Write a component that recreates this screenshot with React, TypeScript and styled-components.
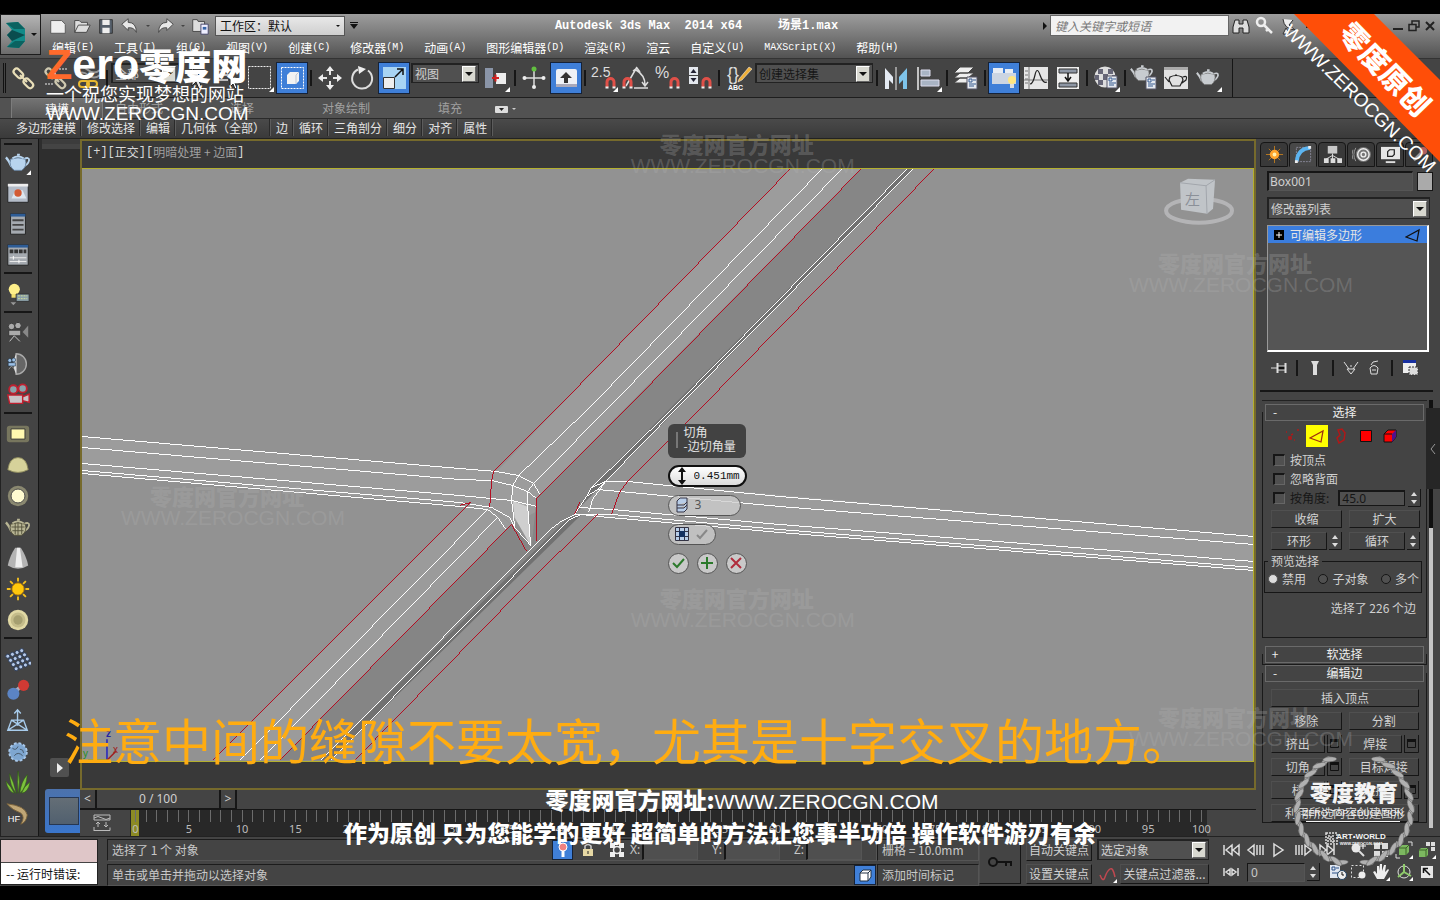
import React from "react";
import styled, { createGlobalStyle, css } from "styled-components";

const UI = `"Noto Sans", "Noto Sans CJK SC", sans-serif`;
const CJK = `"Noto Sans CJK SC", sans-serif`;
const MONO = `"Liberation Mono", "Noto Sans CJK SC", monospace`;
const WIDE = `"Liberation Sans", "Noto Sans CJK SC", sans-serif`;

const Global = createGlobalStyle`
  *, *::before, *::after { box-sizing: border-box; }
  body { margin: 0; background: #000; color: #d0d0d0; font: 12px/16px ${UI}; }
  button, input, select { font: inherit; color: inherit; margin: 0; padding: 0; border: 0; border-radius: 0; background: none; }
  button, select { appearance: none; cursor: pointer; }
  svg { display: block; flex: none; }
`;

/* ---------- shell ---------- */
const Page = styled.div`
  position: relative;
  display: flex;
  flex-direction: column;
  min-height: 100vh;
  padding: 14px 0;
  overflow: hidden;
`;
const Header = styled.header`
  display: grid;
  grid-template-columns: 41px 1fr;
  height: 45px;
  background: linear-gradient(#9c9c9c, #787878 50%, #525252);
  border-bottom: 1px solid #333;
`;
const AppButton = styled.button`
  display: flex;
  align-items: center;
  justify-content: center;
  gap: 4px;
  height: 41px;
  border: 1px solid #1c1c1c;
  background: linear-gradient(#b4b4b4, #6c6c6c);
`;
const HeaderRows = styled.div`
  display: flex;
  flex-direction: column;
  min-width: 0;
`;
const TitleRow = styled.div`
  display: flex;
  align-items: center;
  height: 23px;
  padding-left: 5px;
`;
const QuickButton = styled.button<{ $narrow?: boolean }>`
  display: flex;
  align-items: center;
  justify-content: center;
  width: ${(p) => (p.$narrow ? 11 : 24)}px;
  height: 22px;
`;
const Workspace = styled.label`
  display: flex;
  align-items: center;
  width: 130px;
  height: 20px;
  margin: 0 3px;
  border: 1px solid #555;
  background: linear-gradient(#e8e8e8, #cfcfcf);
  color: #111;
  select { flex: 1; padding-left: 4px; outline: 0; font: 12px/18px ${CJK}; }
  svg { margin-right: 4px; pointer-events: none; }
`;
const Title = styled.h1`
  flex: 1;
  margin: 0;
  padding-right: 5px;
  text-align: center;
  white-space: pre;
  overflow: hidden;
  font: bold 12px/20px ${MONO};
  color: #fff;
`;
const Search = styled.input`
  width: 179px;
  height: 21px;
  padding: 0 4px;
  border: 1px solid #666;
  background: #f2f2f2;
  font: italic 12px/18px ${CJK};
  &::placeholder { color: #777; opacity: 1; }
`;
const WindowButtons = styled.div`
  display: flex;
  margin-left: 41px;
  padding-right: 2px;
  button { display: flex; align-items: center; justify-content: center; width: 16px; height: 22px; }
`;
const MenuBar = styled.nav`
  display: flex;
  gap: 20px;
  padding-left: 11px;
  color: #fff;
  font: 12px/22px ${CJK};
  white-space: nowrap;
  button { display: flex; }
  kbd { font: 10px/22px ${MONO}; }
`;

/* ---------- toolbar ---------- */
const Toolbar = styled.div`
  display: flex;
  align-items: center;
  height: 39px;
  background: #444;
  border-bottom: 1px solid #1e1e1e;
`;
const ToolbarInner = styled.div`
  display: flex;
  align-items: center;
  height: 38px;
  padding-right: 8px;
  border-right: 1px solid #161616;
`;
const Grip = styled.i`
  width: 8px;
  height: 30px;
  background: linear-gradient(90deg, transparent 3px, #111 3px 4px, transparent 4px 5px, #111 5px 6px, transparent 6px);
`;
const Tool = styled.button<{ $on?: boolean }>`
  display: flex;
  align-items: center;
  justify-content: center;
  width: 32px;
  height: 32px;
  ${(p) =>
    p.$on &&
    css`
      background: #3f7fd8;
      border: 1px solid #152238;
    `}
`;
const Sep = styled.i`
  width: 6px;
  height: 16px;
  background: linear-gradient(90deg, transparent 2px, #161616 2px 4px, transparent 4px);
`;
const SelectBox = styled.label<{ $w?: number; $h?: number; $dim?: boolean }>`
  display: flex;
  align-items: center;
  ${(p) => (p.$w ? `width: ${p.$w}px;` : "")}
  height: ${(p) => p.$h ?? 20}px;
  padding: 0 2px;
  border: 1px solid #222;
  border-width: 2px 1px 1px 2px;
  background: #505050;
  color: ${(p) => (p.$dim ? "#161616" : "#d0d0d0")};
  select { flex: 1; min-width: 0; outline: 0; font: 12px/16px ${CJK}; }
`;
const SelectArrow = styled.span`
  display: flex;
  align-items: center;
  justify-content: center;
  width: 14px;
  height: 16px;
  border: 1px solid #fff;
  border-color: #fff #666 #666 #fff;
  background: #d8d8d0;
  pointer-events: none;
`;
const ToolSelect = styled.div<{ $w: number }>`
  width: ${(p) => p.$w}px;
  height: 32px;
  padding: 1px;
`;

/* ---------- ribbon ---------- */
const RibbonTabs = styled.div`
  display: flex;
  align-items: stretch;
  height: 21px;
  padding-left: 11px;
  background: #525252;
  border-bottom: 1px solid #2a2a2a;
  font: 12px/20px ${CJK};
  color: #a0a0a0;
`;
const RibbonTab = styled.button<{ $w: number; $on?: boolean }>`
  width: ${(p) => p.$w}px;
  text-align: right;
  ${(p) =>
    p.$on &&
    css`
      text-align: center;
      background: linear-gradient(#737373, #555);
      border: 1px solid #7c7c7c;
      border-bottom: 0;
      color: #e8e8e8;
    `}
`;
const RibbonView = styled.div`
  display: flex;
  gap: 1px;
  margin-left: 34px;
`;
const RibbonPanels = styled.div`
  display: flex;
  height: 20px;
  padding-left: 11px;
  background: linear-gradient(#4a4a4a, #3a3a3a);
  border-bottom: 1px solid #222;
  font: 12px/16px ${CJK};
  color: #e6e6e6;
  white-space: nowrap;
  button { height: 17px; padding: 0 5px; border-right: 1px solid #5c5c5c; box-shadow: inset -1px 0 #2a2a2a; }
`;

/* ---------- body ---------- */
const Body = styled.div`
  display: grid;
  grid-template-columns: 39px 41px minmax(0, 1fr) 184px;
  flex: 1;
  min-height: 0;
  background: #444;
`;
const SideTools = styled.aside`
  display: flex;
  flex-direction: column;
  align-items: center;
  padding: 4px 2px 0 0;
  border-right: 1px solid #161616;
  background: #444;
  box-shadow: inset 1px 0 #222;
`;
const SideTool = styled.button`
  display: flex;
  align-items: center;
  justify-content: center;
  width: 32px;
  height: 31px;
`;
const SideLine = styled.hr<{ $top?: boolean }>`
  width: 28px;
  height: 2px;
  margin: ${(p) => (p.$top ? "0 0 1px" : "2px 0 4px")};
  border: 0;
  background: #161616;
`;
const LayoutStrip = styled.div`
  display: flex;
  flex-direction: column;
  background: #2e2e2e;
`;
const StripHead = styled.div`
  height: 10px;
  margin-left: 3px;
  border-top: 5px solid #3c3c3c;
  background: #444;
`;
const StripPlay = styled.button`
  display: flex;
  align-items: center;
  justify-content: center;
  width: 19px;
  height: 19px;
  margin: auto 0 12px 11px;
  border-radius: 2px;
  background: #505050;
`;
const LayoutThumb = styled.button`
  height: 44px;
  margin: 0 0 3px 6px;
  padding: 7px 1px 7px 4px;
  border-radius: 3px 0 0 3px;
  background: linear-gradient(#4c72ac, #3a76cc);
  span { display: block; height: 28px; border: 1px solid #263752; background: linear-gradient(#646e76, #51606f); }
`;
const Centre = styled.main`
  display: flex;
  flex-direction: column;
  min-width: 0;
`;
const Viewport = styled.section`
  display: flex;
  flex-direction: column;
  flex: 1;
  border: 2px solid #766a2c;
  background: #393939;
`;
const ViewLabel = styled.div`
  display: flex;
  align-items: flex-start;
  height: 27px;
  padding-left: 4px;
  color: #d8d8d8;
  font: 12px/22px ${CJK};
  white-space: pre;
  button { color: #a0a0a0; }
  b { font: 12px/22px ${MONO}; }
`;
const Canvas = styled.div`
  position: relative;
  flex: 1;
  min-height: 400px;
  margin-bottom: 26px;
  border: 1px solid #b4b02e;
  border-width: 1px 1px 1px 0;
  background: #929292;
  overflow: hidden;
`;
const Scene = styled.svg`
  position: absolute;
  inset: 0;
  width: 100%;
  height: 100%;
`;
const Caddy = styled.form`
  position: absolute;
  left: 50%;
  top: 43%;
  display: flex;
  flex-direction: column;
  align-items: flex-start;
  gap: 8px;
`;
const CaddyTitle = styled.div`
  width: 78px;
  height: 34px;
  margin-bottom: -1px;
  padding: 1px 0 0 16px;
  border-radius: 6px;
  background: linear-gradient(90deg, transparent 8px, #777 8px 10px, transparent 10px) 0 8px / 100% 16px no-repeat, #424242;
  color: #e4e4e4;
  font: 12px/14px ${CJK};
  white-space: nowrap;
`;
const Pill = styled.label<{ $w: number; $focus?: boolean }>`
  display: flex;
  align-items: center;
  gap: 6px;
  width: ${(p) => p.$w}px;
  height: ${(p) => (p.$focus ? 22 : 21)}px;
  padding: 0 5px 0 6px;
  border: ${(p) => (p.$focus ? "2px solid #101010" : "1px solid #555")};
  border-radius: 11px;
  background: ${(p) => (p.$focus ? "linear-gradient(#fff, #dcdcdc)" : "rgba(205, 205, 205, .78)")};
  color: ${(p) => (p.$focus ? "#111" : "#555")};
  input { flex: 1; min-width: 0; width: 0; outline: 0; font: 12px/16px ${UI}; }
`;
const AmountInput = styled.input`
  && { font: 11px/16px ${MONO}; text-align: right; }
`;
const CaddyActions = styled.div`
  display: flex;
  gap: 8px;
  button { display: flex; align-items: center; justify-content: center; width: 21px; height: 21px; border: 1px solid #555; border-radius: 50%; background: #c9c9c9; }
`;

/* ---------- time line ---------- */
const TrackRow = styled.div`
  display: flex;
  height: 20px;
  border-bottom: 1px solid #161616;
  font: 12px/18px ${UI};
`;
const TrackButton = styled.button<{ $w: number }>`
  width: ${(p) => p.$w}px;
  border: 1px solid #161616;
  border-width: 0 2px 1px 0;
  background: #444;
`;
const TimeRow = styled.div`
  display: flex;
  height: 26px;
  padding-right: 49px;
`;
const TimeIcon = styled.button`
  display: flex;
  justify-content: flex-end;
  align-items: center;
  width: 50px;
  padding-right: 19px;
`;
const Ruler = styled.div`
  display: flex;
  flex-direction: column;
  flex: 1;
  padding: 0 5px;
  background: linear-gradient(90deg, transparent 1px, #8c8a24 1px 9px, transparent 9px), #282828;
`;
const Ticks = styled.div`
  display: flex;
  justify-content: space-between;
  height: 12px;
  i { width: 1px; background: #6c6c6c; }
`;
const TickLabels = styled.div`
  display: flex;
  justify-content: space-between;
  font: 11px/14px ${UI};
  color: #bdbdbd;
  span { display: flex; justify-content: center; width: 1px; white-space: nowrap; }
`;

/* ---------- status bar ---------- */
const Status = styled.footer`
  display: flex;
  height: 50px;
  padding: 2px 0 1px;
  background: #444;
  border-top: 1px solid #222;
  font: 12px/20px ${CJK};
  color: #c8c8c8;
  white-space: nowrap;
`;
const Listener = styled.div`
  display: flex;
  flex-direction: column;
  width: 98px;
  margin-right: 9px;
  border: 1px solid #222;
  background: #fff;
  color: #111;
`;
const ListenerLine = styled.input<{ $pink?: boolean }>`
  width: 100%;
  height: ${(p) => (p.$pink ? 22 : 23)}px;
  padding-left: 5px;
  ${(p) => (p.$pink ? "background: #dfc6c8;" : "border-top: 1px solid #444;")}
`;
const StatusColumn = styled.div<{ $w?: number; $gap?: number; $pad?: number }>`
  display: flex;
  flex-direction: column;
  gap: ${(p) => p.$gap ?? 3}px;
  padding: 0 ${(p) => p.$pad ?? 0}px;
  ${(p) => (p.$w ? `width: ${p.$w}px;` : "flex: 1; min-width: 0;")}
`;
const StatusLine = styled.div`
  display: flex;
  align-items: center;
  height: 22px;
  padding-left: 4px;
  border: 1px solid #1c1c1c;
  border-color: #1c1c1c #555 #555 #1c1c1c;
`;
const Prompt = styled.output`
  flex: 1;
  min-width: 0;
  overflow: hidden;
`;
const SmallTool = styled.button<{ $on?: boolean; $w?: number }>`
  display: flex;
  align-items: center;
  justify-content: center;
  width: ${(p) => p.$w ?? 27}px;
  height: 20px;
  ${(p) => p.$on && "background: #3f7fd8; border: 1px solid #152238;"}
`;
const Coord = styled.label`
  display: flex;
  align-items: center;
  width: 82px;
  gap: 2px;
  font-family: ${UI};
  input { width: 56px; height: 20px; border: 1px solid #222; border-left-width: 2px; border-color: #444 #555 #555 #161616; background: #4f4f4f; }
`;
const FlatButton = styled.button<{ $w?: number; $h?: number }>`
  display: flex;
  align-items: center;
  justify-content: center;
  ${(p) => (p.$w ? `width: ${p.$w}px;` : "flex: 1;")}
  height: ${(p) => p.$h ?? 18}px;
  border: 1px solid #161616;
  border-color: #505050 #161616 #161616 #4e4e4e;
  background: #444;
  color: #d2d2d2;
  font: 12px/16px ${CJK};
  white-space: nowrap;
`;
const PlayGrid = styled.div`
  display: grid;
  grid-template-columns: repeat(5, 24px);
  grid-auto-rows: 22px;
  align-items: center;
  margin-left: 10px;
  button { display: flex; align-items: center; justify-content: center; height: 22px; }
`;
const FrameField = styled.label`
  grid-column: span 3;
  display: flex;
  gap: 2px;
  padding-left: 4px;
  input { width: 58px; height: 19px; padding-left: 3px; border: 1px solid #161616; border-color: #161616 #555 #555 #161616; background: #4f4f4f; font: 12px/16px ${UI}; }
`;
const TimeConfig = styled.div`
  display: flex;
  justify-content: flex-end;
  width: 32px;
`;
const NavGrid = styled.div`
  display: grid;
  grid-template-columns: repeat(4, 23px);
  grid-auto-rows: 22px;
  margin-left: 7px;
  padding-right: 2px;
  button { display: flex; align-items: center; justify-content: center; }
`;

/* ---------- command panel ---------- */
const Panel = styled.aside`
  display: flex;
  flex-direction: column;
  padding: 3px 7px 0 4px;
  background: #444;
  font: 12px/16px ${CJK};
  overflow: hidden;
`;
const PanelTabs = styled.div`
  display: flex;
  gap: 1px;
`;
const PanelTab = styled.button<{ $on?: boolean }>`
  display: flex;
  align-items: center;
  justify-content: center;
  width: 28px;
  height: 25px;
  border: 1px solid #161616;
  border-radius: 4px 4px 0 0;
  ${(p) => (p.$on ? "border-bottom-color: #444; background: #484848;" : "background: #393939;")}
`;
const NameRow = styled.div`
  display: flex;
  align-items: center;
  gap: 4px;
  margin: 4px 0 6px 7px;
`;
const ModifierRow = styled.div`
  margin-left: 7px;
`;
const NameInput = styled.input`
  flex: 1;
  min-width: 0;
  height: 20px;
  padding-left: 1px;
  border: 2px solid #161616;
  border-width: 2px 1px 1px 2px;
  border-color: #161616 #555 #555 #161616;
  background: #505050;
  font: 12px/16px ${UI};
`;
const Swatch = styled.button`
  width: 16px;
  height: 19px;
  border: 1px solid #161616;
  background: #aaa;
`;
const Stack = styled.div`
  height: 127px;
  margin: 6px 4px 0 7px;
  border: 2px solid #fff;
  border-width: 1px 2px 2px 1px;
  border-color: #999 #fff #fff #999;
  background: #555;
`;
const StackItem = styled.button`
  display: flex;
  align-items: center;
  gap: 6px;
  width: 100%;
  height: 17px;
  padding: 0 6px;
  background: #3b7ddd;
  color: #e4e4e4;
  font: 12px/16px ${CJK};
  span { flex: 1; text-align: left; }
`;
const StackTools = styled.div`
  display: flex;
  align-items: center;
  justify-content: space-between;
  height: 31px;
  padding: 0 13px 0 11px;
  button { display: flex; }
`;
const Rule = styled.hr`
  width: 100%;
  height: 2px;
  margin: 7px 0 8px;
  border: 0;
  background: #161616;
`;
const RollArea = styled.div`
  position: relative;
  display: flex;
  flex: 1;
  gap: 2px;
  min-height: 0;
  margin-left: 2px;
`;
const Rolls = styled.div`
  display: flex;
  flex-direction: column;
  gap: 8px;
  flex: 1;
  min-width: 0;
  border-top: 1px solid #222;
`;
const Scroll = styled.div`
  width: 4px;
  background: linear-gradient(#111 128px, #c4c4c4 128px);
  margin-bottom: 8px;
`;
const Flyout = styled.button`
  position: absolute;
  right: -7px;
  top: 8px;
  display: flex;
  align-items: center;
  justify-content: center;
  width: 14px;
  height: 81px;
  background: #262626;
`;
const Rollout = styled.section<{ $h?: number; $top?: number }>`
  ${(p) => (p.$h ? `height: ${p.$h}px;` : "")}
  margin-top: ${(p) => p.$top ?? 0}px;
  padding: 0 2px;
  border: 1px solid #1a1a1a;
  border-top: 0;
`;
const RollHead = styled.button`
  display: grid;
  grid-template-columns: 12px 1fr 12px;
  width: 100%;
  height: 17px;
  margin-top: -8px;
  padding: 0 3px;
  border: 1px solid #6a6a6a;
  background: #444;
  color: #eee;
  font: 12px/14px ${CJK};
  text-align: center;
`;
const SubObjects = styled.div`
  display: flex;
  align-items: center;
  justify-content: space-between;
  height: 23px;
  margin: 3px 0;
  padding: 0 23px 0 16px;
  button { display: flex; align-items: center; justify-content: center; width: 22px; height: 22px; }
`;
const EdgeMode = styled.button`
  background: #ff0;
`;
const CheckRow = styled.div`
  display: flex;
  align-items: center;
  height: 19px;
  padding-left: 8px;
  gap: 9px;
`;
const Check = styled.label<{ $dim?: boolean }>`
  display: flex;
  align-items: center;
  gap: 5px;
  color: ${(p) => (p.$dim ? "#161616" : "#d0d0d0")};
  white-space: nowrap;
  input { appearance: none; width: 12px; height: 12px; border: 2px solid #161616; border-width: 2px 1px 1px 2px; border-color: #161616 #666 #666 #161616; background: #505050; }
`;
const AngleInput = styled.input`
  width: 67px;
  height: 16px;
  margin-right: -6px;
  padding-left: 2px;
  border: 1px solid #161616;
  border-width: 2px 1px 1px 2px;
  background: #505050;
  color: #161616;
  font: 12px/12px ${UI};
`;
const ButtonGrid = styled.div<{ $gap: number; $pad: string }>`
  display: grid;
  grid-template-columns: 1fr 1fr;
  gap: ${(p) => p.$gap}px 7px;
  padding: ${(p) => p.$pad};
`;
const Pair = styled.div<{ $wide?: boolean }>`
  display: flex;
  gap: 2px;
  ${(p) => p.$wide && "grid-column: span 2;"}
`;
const Group = styled.fieldset`
  display: flex;
  justify-content: space-between;
  height: 40px;
  margin: 3px 2px 0 -1px;
  padding: 0 2px 0 3px;
  border: 1px solid #161616;
  legend { padding: 0 3px; line-height: 16px; }
`;
const Radio = styled.label`
  display: flex;
  align-items: center;
  gap: 4px;
  height: 20px;
  white-space: nowrap;
  input { appearance: none; width: 10px; height: 10px; border: 1px solid #161616; border-radius: 50%; background: #505050; }
  input:checked { background: #ddd; border-color: #555; }
`;
const Count = styled.p`
  margin: 7px 8px 0 0;
  text-align: right;
`;

/* ---------- overlays ---------- */
const Overlay = styled.div`
  position: absolute;
  pointer-events: none;
  white-space: nowrap;
`;
const Logo = styled(Overlay)`
  left: 46px;
  top: 45px;
  color: #fff;
`;
const LogoName = styled.div`
  display: flex;
  align-items: center;
  height: 38px;
  font: bold 43px/38px ${WIDE};
  span { color: #ff6a2c; }
  b { font: 900 36px/36px ${CJK}; }
`;
const LogoSlogan = styled.div`
  font: 18px/20px ${CJK};
`;
const LogoUrl = styled.div`
  font: 19px/22px ${WIDE};
`;
const Watermark = styled(Overlay)<{ $x: number; $y: number }>`
  left: ${(p) => p.$x}%;
  top: ${(p) => p.$y}px;
  color: rgba(180, 180, 180, .27);
  font: 900 22px/24px ${CJK};
  text-indent: 29px;
  span { display: block; text-indent: 0; font: 21px/22px ${WIDE}; }
`;
const Subtitle = styled(Overlay)`
  left: 64px;
  bottom: 135px;
  color: #ffac10;
  font: 49px/52px ${CJK};
`;
const Captions = styled(Overlay)`
  left: 0;
  right: 0;
  bottom: 52px;
  text-align: center;
  color: #fff;
  font: 900 23px/31px ${CJK};
  span { font: 21px/31px ${WIDE}; }
  p { margin: 0; }
  p:first-child { padding-left: 44px; }
`;
const Corner = styled(Overlay)`
  right: 0;
  top: 14px;
`;
const Badge = styled(Overlay)`
  right: 20px;
  bottom: 28px;
`;

/* ---------- icons ---------- */
const I = ({ s = 28, b = 28, children }: { s?: number; b?: number; children: React.ReactNode }) => (
  <svg width={s} height={s} viewBox={`0 0 ${b} ${b}`} fill="none">
    {children}
  </svg>
);
const Down = ({ c = "#111", s = 8 }: { c?: string; s?: number }) => (
  <svg width={s} height={s / 2} viewBox="0 0 8 4"><path d="M0 0h8L4 4z" fill={c} /></svg>
);
const Fly = () => <path d="M28 23v5h-5z" fill="#fff" />;
const Magnet = ({ x = 14, y = 14 }) => (
  <g transform={`translate(${x} ${y})`}>
    <path d="M2 10V5a3.500 3.500 0 0 1 7 0v5" stroke="#e05048" strokeWidth="3" />
    <path d="M.5 10.500h3M7.500 10.500h3" stroke="#eee" strokeWidth="2" />
  </g>
);
const Teapot = ({ fill = "#c8ccd0", line = "#777" }) => (
  <g>
    <path d="M7 19Q4 12 1 9" stroke={fill} strokeWidth="2.500" />
    <path d="M20 11q6-3 6 1-1 5-7 7" stroke={fill} strokeWidth="2" />
    <path d="M6 11q-2 8 4 12h8q6-4 4-12-8-3-16 0z" fill={fill} stroke={line} />
    <path d="M8 10q6-4 12 0M13 6h3" stroke={fill} strokeWidth="2" />
  </g>
);
const Doc = ({ x = 16, y = 14 }) => (
  <g transform={`translate(${x} ${y})`}>
    <path d="M0 0h10v12H0z" fill="#e6eaf0" stroke="#556" />
    <path d="M2 2h3v3H2zM6 3h3M2 7h7M2 9h5" stroke="#35588e" />
  </g>
);
const Chain = ({ c = "#e9dfb8" }) => (
  <g stroke={c} strokeWidth="2.200">
    <rect x="3" y="6" width="11" height="6" rx="3" transform="rotate(45 8 9)" />
    <rect x="13" y="16" width="11" height="6" rx="3" transform="rotate(45 18 19)" />
    <path d="M10 11l7 7" />
  </g>
);
const EdgeTri = ({ c = "#111" }) => (
  <svg width="16" height="14" viewBox="0 0 16 14" fill="none"><path d="M1 9L14 2l-2 11z" stroke={c} strokeWidth="1.300" /></svg>
);
const Spin = () => (
  <svg width="13" height="18" viewBox="0 0 13 18">
    <path d="M12.500 0v17.500H0" fill="none" stroke="#161616" />
    <path d="M3 7l3-4 3 4zM3 11l3 4 3-4z" fill="#ddd" />
  </svg>
);
const Settings = () => (
  <svg width="15" height="18" viewBox="0 0 15 18">
    <path d="M.5 0v18M14.500 0v17.500H0" fill="none" stroke="#161616" />
    <path d="M3.500 4.500h8v8h-8z" fill="none" stroke="#111" /><path d="M3 4h9v3H3z" fill="#111" />
  </svg>
);

const quick = [
  <path key="n" d="M3 5h12l4 4v10H3z" fill="#eee" stroke="#555" />,
  <path key="o" d="M3 18V5h5l2 2h7v3M3 18l4-8h13l-4 8z" fill="#ddd" stroke="#444" />,
  <g key="s"><path d="M4 4h14v15H4z" fill="#56606c" stroke="#333" /><path d="M7 4h8v6H7zM7 13h8v6H7z" fill="#eee" /></g>,
  <path key="u" d="M2 9l7-6v4q9 0 9 11-3-6-9-5v3z" fill="#e8e8e8" stroke="#444" />,
  null,
  <path key="r" d="M20 9l-7-6v4q-9 0-9 11 3-6 9-5v3z" fill="#e8e8e8" stroke="#444" />,
  null,
  <g key="p"><path d="M3 4h5l1 2h7v11H3z" fill="#ddd" stroke="#444" /><path d="M12 9h8v11h-8z" fill="#eef" stroke="#446" /><path d="M14 12h4v3h-4z" fill="#3865a8" /></g>,
];

const menus: [string, string][] = [
  ["编辑", "(E)"], ["工具", "(T)"], ["组", "(G)"], ["视图", "(V)"], ["创建", "(C)"], ["修改器", "(M)"], ["动画", "(A)"],
  ["图形编辑器", "(D)"], ["渲染", "(R)"], ["渲云", ""], ["自定义", "(U)"], ["", "MAXScript(X)"], ["帮助", "(H)"],
];

type ToolDef = { k: string; on?: boolean; d?: React.ReactNode; select?: [string, number, boolean?] };
const tools: ToolDef[] = [
  { k: "链接", d: <Chain /> },
  { k: "断开链接", d: <><Chain c="#cfc9b0" /><path d="M3 20h8M17 5h8" stroke="#999" strokeWidth="2" strokeDasharray="2 1" /></> },
  { k: "绑定", d: <><path d="M2 6q6-5 12 0t12 0M2 11q6-5 12 0t12 0" stroke="#999" strokeWidth="2" /><rect x="5" y="17" width="10" height="6" rx="3" stroke="#e8b830" strokeWidth="2" /><rect x="13" y="17" width="10" height="6" rx="3" stroke="#e8b830" strokeWidth="2" /></> },
  { k: "-" },
  { k: "选择过滤器", select: ["全部", 70] },
  { k: "选择对象", d: <path d="M10 4v18l4-4 3 7 3-1-3-7h6z" fill="#e8e8e8" stroke="#222" /> },
  { k: "按名称选择", d: <><path d="M4 6h14M4 11h14M4 16h10" stroke="#bbb" strokeWidth="2" /><path d="M16 10v13l3-3 2 5 2-1-2-5h4z" fill="#fff" stroke="#222" /></> },
  { k: "矩形选择区域", d: <><path d="M2.500 2.500h22v22h-22z" stroke="#eee" strokeDasharray="2 1" /><Fly /></> },
  { k: "窗口/交叉", on: true, d: <><path d="M3.500 3.500h22v21h-22z" stroke="#fff" strokeDasharray="2 1" /><path d="M9 11l3-3h9v9l-3 3H9z" fill="#f2f2f2" /><path d="M18 20v-9l3-3" stroke="#c0c8d4" /></> },
  { k: "-" },
  { k: "移动", d: <><path d="M14 5v6M14 17v6M5 14h6M17 14h6" stroke="#e6e6e6" strokeWidth="2" /><path d="M10 7l4-5 4 5zM10 21l4 5 4-5zM7 10l-5 4 5 4zM21 10l5 4-5 4z" fill="#eee" /></> },
  { k: "旋转", d: <><path d="M10 5.500a10 10 0 1 0 10 1" stroke="#ddd" strokeWidth="2" /><path d="M10 2l8 3-7 5z" fill="#eee" /></> },
  { k: "缩放", on: true, d: <><path d="M3 3h23v22H3z" fill="#a8d4f4" /><path d="M3.500 13.500h11v11h-11z" fill="#eee" stroke="#333" /><path d="M15 13l8-8M17 5h6v6" stroke="#111" strokeWidth="1.500" /></> },
  { k: "参考坐标系", select: ["视图", 70] },
  { k: "使用轴点中心", d: <><path d="M3 4h8v20H3z" fill="#8a95a8" /><path d="M14 9h10v11H14z" fill="#eee" /><path d="M10 14h7M13.500 10.500v7" stroke="#d02020" strokeWidth="2" /><Fly /></> },
  { k: "-" },
  { k: "选择并操纵", d: <><path d="M14 7v15M6 14h16" stroke="#ddd" strokeWidth="1.500" /><circle cx="14" cy="5" r="2.500" fill="#62c040" /><circle cx="4.500" cy="14" r="2" fill="#eee" /><circle cx="23.500" cy="14" r="2" fill="#eee" /><circle cx="14" cy="23" r="2" fill="#eee" /></> },
  { k: "键盘快捷键覆盖", on: true, d: <><rect x="4" y="5" width="21" height="18" rx="2" fill="#eef1f6" /><path d="M14 8l6 6h-4v5h-4v-5H8z" fill="#333" /><path d="M4 20h21v3H4z" fill="#aab" /></> },
  { k: "-" },
  { k: "捕捉开关", d: <><text x="1" y="13" fontSize="14" fill="#ddd" fontFamily="Liberation Sans">2.5</text><Magnet x={15} y={13} /><Fly /></> },
  { k: "角度捕捉", d: <><path d="M4 22L15 3M12 24h14M14 6q9 5 9 15M11 7l4-3 3 4M20 18l3 4 3-4" stroke="#ddd" strokeWidth="1.500" /><Magnet x={0} y={13} /></> },
  { k: "百分比捕捉", d: <><text x="1" y="14" fontSize="16" fill="#ddd" fontFamily="Liberation Sans">%</text><Magnet x={15} y={13} /></> },
  { k: "微调器捕捉", d: <><path d="M3 3h9v8H3zM3 12h9v8H3z" fill="#e4e8ee" /><path d="M4.500 9L7.500 5l3 4zM4.500 14l3 4 3-4z" fill="#223" /><Magnet x={15} y={13} /></> },
  { k: "-" },
  { k: "编辑命名选择集", d: <><text x="3" y="16" fontSize="18" fill="#ddd" fontFamily="Liberation Sans">{"{}"}</text><path d="M15 15L25 3l3 2-10 11-4 2z" fill="#f0b038" stroke="#fff" strokeWidth=".5" /><text x="4" y="26" fontSize="7" fontWeight="bold" fill="#fff" fontFamily="Liberation Sans">ABC</text></> },
  { k: "命名选择集", select: ["创建选择集", 120, true] },
  { k: "-" },
  { k: "镜像", d: <><path d="M3 4l8 9v7l-4-4v9H3z" fill="#e4eaf2" /><path d="M14 3v23" stroke="#eee" /><path d="M25 4l-8 9v7l4-4v9h4z" fill="#7ec4ea" /></> },
  { k: "对齐", d: <><path d="M4 3v23" stroke="#eee" strokeWidth="1.500" /><path d="M7 6h9v6H7zM7 16h18v6H7z" fill="#a9b4c4" stroke="#dde" /><Fly /></> },
  { k: "-" },
  { k: "层管理器", d: <><path d="M8 3h14l-6 6H2zM8 9h14l-6 5H2zM8 14h14l-6 5H2z" fill="#eee" stroke="#444" /><Doc x={15} y={13} /></> },
  { k: "-" },
  { k: "石墨建模工具", on: true, d: <><path d="M2 9h24v11H2z" fill="#ccd5e2" /><path d="M3 4h10v5H3zM15 5h8v4h-8z" fill="#e8edf4" /><circle cx="22" cy="16" r="4" fill="#ffe680" /><path d="M20 20h4v4h-4z" fill="#ddd" /></> },
  { k: "曲线编辑器", d: <><path d="M2 3h24v22H2z" fill="#e6e6e6" /><path d="M7 3v22M3 7h3M3 11h3M3 15h3M3 19h3M2 16h24" stroke="#777" /><path d="M8 20q3 0 5-9t5 0 7 7" stroke="#222" strokeWidth="1.200" /></> },
  { k: "图解视图", d: <><path d="M3 3h22v22H3z" fill="#eee" /><path d="M5 5h18v4H5zM5 19h18v4H5z" fill="#8d96a4" stroke="#333" /><path d="M14 9v7M11 13l3 4 3-4" stroke="#111" strokeWidth="1.500" /></> },
  { k: "-" },
  { k: "材质编辑器", d: <><circle cx="13" cy="13" r="10.500" fill="#ddd" /><path d="M6 5h5v5H6zM16 5h5v5h-5zM3 11h4v5H3zM11 10h5v6h-5zM20 11h3v5h-3zM6 16h5v5H6zM16 16h5v5h-5z" fill="#667" /><Doc x={15} y={12} /><Fly /></> },
  { k: "-" },
  { k: "渲染设置", d: <><g transform="translate(0 -3) scale(.85)"><Teapot /></g><Doc x={16} y={13} /></> },
  { k: "渲染帧窗口", d: <><path d="M2 3h24v22H2z" fill="#e2e2e2" /><path d="M2 3h24v3H2z" fill="#aaa" /><path d="M8 13q6-3 12 0l1 3-3 6h-8l-3-6zM13 11h2M7 18l-4-5M21 13q5-2 3 3l-4 3" stroke="#222" strokeWidth="1.200" /></> },
  { k: "渲染产品", d: <><g transform="translate(2 1) scale(.85)"><Teapot /></g><Fly /></> },
];

const ribbonPanels = ["多边形建模", "修改选择", "编辑", "几何体（全部）", "边", "循环", "三角剖分", "细分", "对齐", "属性"];

const Cam = ({ c = "#aaa", a = "#333" }) => (
  <g>
    <circle cx="7" cy="7" r="3.500" fill={c} stroke={a} /><circle cx="14" cy="6" r="3.500" fill={c} stroke={a} />
    <path d="M4 11h13v6H4z" fill={c} stroke={a} /><path d="M10 17l-5 6M10 17l6 6" stroke="#ccc" />
  </g>
);
const side: (React.ReactNode | "-")[] = [
  <><Teapot fill="#b8d4ee" line="#6a86a4" /><Fly /></>,
  <><path d="M3 4h22v20H3z" fill="#b4bcc8" stroke="#222" /><path d="M3 4h22v3H3z" fill="#eee" /><path d="M7 20l4-9h8l4 9z" fill="#dde6ef" /><circle cx="14" cy="14" r="4" fill="#d25a34" /></>,
  <><path d="M6 3h16v22H6z" fill="#a5aab0" stroke="#222" /><path d="M6 3h16v3H6z" fill="#2d5c96" /><path d="M8 10h12M8 15h12M8 20h12" stroke="#444" strokeWidth="2" /></>,
  <><path d="M3 3h22v22H3z" fill="#a5aab0" stroke="#222" /><path d="M3 3h22v3H3z" fill="#2d5c96" /><path d="M5 10h18" stroke="#333" strokeWidth="4" strokeDasharray="4 1" /><path d="M5 17h18M5 21h18" stroke="#eee" /><path d="M9 15v4M15 19v4" stroke="#fff" /></>,
  "-",
  <><circle cx="10" cy="9" r="6" fill="#fff08a" /><path d="M7 14h6v4H7z" fill="#f4e270" /><path d="M12 14h14v8H12z" fill="#8ba0a8" stroke="#333" /><path d="M14 16h10M14 19h10" stroke="#d4e29a" strokeDasharray="2 1" /><path d="M6 23h6l-3 3z" fill="#999" /></>,
  "-",
  <><Cam /><path d="M25 6v13l-6-6z" fill="#888" /></>,
  <><path d="M12 3a11 11 0 0 1 0 22z" fill="#666" stroke="#aaa" strokeWidth="1.500" /><path d="M12 3q-6 11 0 22" fill="#ddd" /><g transform="translate(1 6) scale(.6)"><Cam c="#9cc0e6" a="#123" /></g></>,
  <><circle cx="9" cy="8" r="4.500" fill="#8aa4ac" stroke="#c02030" strokeWidth="2" /><circle cx="19" cy="7" r="4.500" fill="#8aa4ac" stroke="#c02030" strokeWidth="2" /><path d="M3 14h16v9H5zM19 16l7-3v9l-7-2z" fill="#c8c4c8" stroke="#c02030" strokeWidth="1.500" /></>,
  "-",
  <><rect x="2" y="5" width="24" height="18" rx="3" fill="#77765e" /><path d="M6.500 8.500h15v11h-15z" fill="#fff9b0" stroke="#333" /></>,
  <path d="M3 19q2-13 11-13t11 13q-11 6-22 0z" fill="#d6d29a" stroke="#8c895c" />,
  <><circle cx="14" cy="14" r="11" fill="#8a8870" /><circle cx="14" cy="14" r="7.500" fill="#fffbd0" stroke="#444" /></>,
  <><Teapot fill="#b8b594" line="#55533c" /><path d="M7 14h14M8 18h12M11 10v12M14 9v14M18 10v12" stroke="#55533c" /></>,
  <><path d="M11 3h6q6 9 8 19-11 7-22 0Q5 12 11 3z" fill="#b4b4b4" /><path d="M13 3h3l3 21h-8z" fill="#eee" /></>,
  <><circle cx="14" cy="14" r="6.500" fill="#ffc80c" stroke="#c88700" /><path d="M14 2v4M14 22v4M2 14h4M22 14h4M5.500 5.500l3 3M19.500 19.500l3 3M22.500 5.500l-3 3M8.500 19.500l-3 3" stroke="#f4c020" strokeWidth="2" /></>,
  <><circle cx="14" cy="14" r="11" fill="#e0d8a4" /><circle cx="14" cy="14" r="8" fill="#c4bc8a" /><circle cx="14" cy="14" r="5" fill="#a59f70" /></>,
  "-",
  <>{[0, 1, 2, 3].map((r) => [0, 1, 2, 3].map((c) => <circle key={`${r}${c}`} cx={3 + c * 5 + r * 3} cy={11 + r * 4.500 - c * 2} r="2.200" fill="#b4c8e8" stroke="#2a3a58" />))}</>,
  <><path d="M9 17L19 9" stroke="#aab" strokeWidth="4" /><circle cx="9" cy="18" r="6.500" fill="#5b84c4" /><circle cx="20" cy="9" r="6" fill="#d03a34" /></>,
  <><path d="M7 13h13l4 11H3zM7 13l17 11M20 13L3 24M13.500 19V3M10 6l3.500-4L17 6" stroke="#a8ccec" strokeWidth="1.500" /></>,
  <><circle cx="14" cy="14" r="9.500" fill="#7ea6d0" stroke="#a8c8ea" strokeWidth="2" strokeDasharray="3 2" /><path d="M8 10q4 3 6-2M10 18q4-5 9 0M16 11q4 0 4 4" stroke="#456" /></>,
  <><path d="M14 25Q13 12 14 1q3 12 0 24M12 25Q10 14 5 4q0 13 7 21M16 25q1-12 8-20-1 14-8 20M10 25Q7 18 1 12q2 11 9 13M18 25q2-7 9-12-2 11-9 12" fill="#7cc23c" stroke="#2f5c12" strokeWidth=".6" /></>,
  <><path d="M2 3q20 2 22 12-1 8-7 10 5-8 0-12Q8 10 2 3z" fill="#c0a676" stroke="#77603a" /><text x="3" y="23" fontSize="10" fill="#fff" fontFamily="Liberation Sans">HF</text></>,
];

const tabs = [
  <><path d="M10 1v18M1 10h18M4 4l12 12M16 4L4 16" stroke="#b87820" /><circle cx="10" cy="10" r="5" fill="#ffa42c" /><circle cx="10" cy="10" r="2" fill="#fff0b0" /></>,
  <><path d="M2.500 2.500h15v15h-15z" stroke="#889" strokeDasharray="2 1" /><path d="M3 17Q4 4 17 3" stroke="#5cb4f0" strokeWidth="4" /><path d="M1 16h3v3H1zM15 1h3v3h-3z" fill="#eee" /></>,
  <><path d="M5 1h10v8H5z" fill="#c8c8c8" /><path d="M10 9v6M10 11L3 15M10 11l7 4" stroke="#ddd" /><path d="M1 14h5v5H1zM8 14h5v5H8zM15 14h5v5h-5z" fill="#ddd" /></>,
  <><path d="M4 3q-4 7 0 14M1 5q-2 5 0 10" stroke="#999" /><circle cx="12" cy="10" r="8" fill="#777" /><circle cx="12" cy="10" r="6" stroke="#eee" strokeWidth="1.500" /><circle cx="12" cy="10" r="2.500" stroke="#eee" strokeWidth="1.500" /></>,
  <><path d="M0 2h20v13H0z" fill="#e6e6e6" /><path d="M7 7l2-2h5v5l-2 2H7z" stroke="#222" strokeWidth="1.300" /><path d="M5 18h10" stroke="#ddd" strokeWidth="2" /></>,
  <><path d="M4 16L14 6" stroke="#999" strokeWidth="3" /><circle cx="14" cy="6" r="4" fill="#b06060" /></>,
];

const play = [
  <path d="M2 4v10M10 4L4 9l6 5zM17 4l-6 5 6 5z" />,
  <path d="M8 4L2 9l6 5zM11 4v10M14 4v10M17 4v10" />,
  <path d="M4 3l9 6-9 6z" />,
  <path d="M2 4v10M5 4v10M8 4v10M11 4l6 5-6 5z" />,
  <path d="M16 4v10M2 4l6 5-6 5zM9 4l6 5-6 5z" />,
];
const nav = [
  <><circle cx="7" cy="7" r="4.500" fill="#e8e8e8" /><path d="M10 10l5 5" stroke="#ddd" strokeWidth="2" /><path d="M14 2v6M11 5h6" stroke="#fff" /></>,
  <path d="M2 2h6v6H2zM10 2h6v6h-6zM2 10h6v6H2zM10 10h6v6h-6z" fill="#ddd" />,
  <><path d="M1 5V1h4M13 1h4v4M1 13v4h4" stroke="#ddd" /><path d="M4 7l3-3h7v7l-3 3H4z" fill="#7cb860" /><path d="M4 7h7v7M11 7l3-3" stroke="#3c6628" /><path d="M18 14v4h-4z" fill="#fff" /></>,
  <><path d="M8 1h4v4H8zM13 1h4v4h-4zM13 6h4v4h-4z" fill="#ddd" /><path d="M1 9l2-2h7v7l-2 2H1z" fill="#7cb860" /><path d="M1 9h7v7M8 9l2-2" stroke="#3c6628" /><path d="M18 14v4h-4z" fill="#fff" /></>,
  <><path d="M2.500 2.500h12v12h-12z" stroke="#ddd" strokeDasharray="2 2" /><circle cx="13" cy="12" r="3.500" fill="#eee" /></>,
  <><path d="M5 16L1 9l2-1 2 3V3h2v5l1-7h2v7l2-6h2l-1 7 3-3 1 1-5 9z" fill="#eee" /><path d="M18 14v4h-4z" fill="#fff" /></>,
  <><circle cx="9" cy="9" r="6" stroke="#ddd" /><path d="M9 1v8l-6 5M9 9l7 4" stroke="#8fca6c" strokeWidth="2" /><path d="M18 14v4h-4z" fill="#fff" /></>,
  <><path d="M3 3h12v12H3z" fill="#e6e6e6" /><path d="M12 12L6 6M5.500 10V5.500H10" stroke="#111" strokeWidth="1.500" /></>,
];

const leaves = Array.from({ length: 12 }, (_, i) => i);

const Choice = ({ label, value, w, h, dim }: { label: string; value: string; w?: number; h?: number; dim?: boolean }) => (
  <SelectBox $w={w} $h={h} $dim={dim}>
    <select aria-label={label}><option>{value}</option></select>
    <SelectArrow><Down /></SelectArrow>
  </SelectBox>
);

const SceneDrawing = () => (
  <Scene viewBox="82 169 1172 593" preserveAspectRatio="xMidYMid slice" fill="none" aria-label="透视模型">
    <path d="M82 437L497 472 791 169h71L537 499v13l-25 13-20-17L82 474z" fill="#9c9c9c" />
    <path d="M471 503l19 5 22 17L280 761h-67z" fill="#9b9b9b" />
    <path d="M862 169h46L592 488l-17 27-43 32 5-48z" fill="#868686" />
    <path d="M512 525l20 22 38-30L321 761h-41z" fill="#858585" />
    <path d="M908 169h6L606 482l-24 26-7 7 17-27zM570 517l12-2L331 761h-10z" fill="#717171" />
    <path d="M606 482h22l626 55v34L598 517l-18-9z" fill="#9c9c9c" />
    <path d="M513 501l15 6 3 39-16-28z" fill="#cfcfcf" />
    <path d="M513 486l15 6v15l-16-6z" fill="#a9a9a9" />
    <g stroke="#fff" shapeRendering="crispEdges">
      <path d="M82 437L460 469l37 3 22 4 15 8 7 12" />
      <path d="M82 448L460 480l32 1 21 5 15 6 9 7" />
      <path d="M82 464L460 496l52 5 25 6" />
      <path d="M82 471L460 503l32 5 18 10 5 10 17 19" />
      <path d="M82 474L460 507l28 3 10 8 8 12" />
      <path d="M519 476L588 410 823 169M534 484L607 410 843 169" />
      <path d="M519 476l-6 10-1 15 3 26M534 484l-6 8v15l3 39" />
      <path d="M488 510L240 761M498 518L260 761" />
      <path d="M908 169L672 410 592 488l-5 9-12 18-15 8-9 7L321 761M914 169L676 410 606 482l-8 8" />
      <path d="M598 517l-16-2-12 5L331 761" />
      <path d="M592 488l14-6h22l152 15 474 40M587 497l11-7 22 2 160 15 474 38M580 508l32 2 168 15 474 37M575 515h37l168 15 474 38M598 517l182 16 474 38" />
      <path d="M606 482l-13 18-4 13" />
    </g>
    <g stroke="#b40e22" shapeRendering="crispEdges">
      <path d="M791 169L556 410l-62 62-2 9-2 27M862 169L626 410 537 499v43" />
      <path d="M460 506l11-3L213 761M512 525L280 761M512 525l15 27" />
      <path d="M935 169L700 410l-72 72-8 11-8 22M598 515l-76 75L355 761M580 503l-5 12" />
    </g>
    <g>
      <ellipse cx="1200" cy="211" rx="33" ry="12" stroke="#b4b4b6" strokeWidth="4" />
      <path d="M1181 183l8-4 27 1-2 29-6 5-26-4z" fill="#c0c4c8" />
      <path d="M1181 183l26 3 9-6M1207 186l1 28" stroke="#a2a6ac" />
      <text x="1186" y="205" fontSize="15" fill="#8b9098" fontFamily="Noto Sans CJK SC">左</text>
    </g>
    <g strokeWidth="1.500">
      <path d="M107 761v-21" stroke="#2222c0" /><path d="M107 761l9-9" stroke="#a02020" /><path d="M88 761h19" stroke="#20a020" />
      <text x="106" y="738" fontSize="10" fontWeight="bold" fill="#2222a0" fontFamily="Liberation Sans">z</text>
      <text x="113" y="754" fontSize="10" fill="#a02020" fontFamily="Liberation Sans">x</text>
      <text x="83" y="758" fontSize="10" fill="#209020" fontFamily="Liberation Sans">y</text>
    </g>
  </Scene>
);

const marks: [number, number][] = [[43.8, 131], [78.4, 250], [8.4, 483], [43.8, 585], [78.4, 704]];

export default function App() {
  return (
    <Page>
      <Global />
      <Header>
        <AppButton aria-label="应用程序">
          <svg width="22" height="28" viewBox="0 0 22 28">
            <path d="M1 2l12-1 7 7v12l-6 7-12-1 5-6-5-6 5-5z" fill="#128a88" />
            <path d="M1 2l8 6 11 0-7-7zM2 26l8-6 10 0-6 7z" fill="#0b6260" /><path d="M7 9l13 5-13 6-5-6z" fill="#0a4d4e" />
          </svg>
          <Down s={6} />
        </AppButton>
        <HeaderRows>
          <TitleRow>
            {quick.map((q, i) => (
              <QuickButton key={i} $narrow={!q} aria-label={`快速访问 ${i + 1}`}>{q ? <I s={20} b={22}>{q}</I> : <Down s={4} c="#444" />}</QuickButton>
            ))}
            <Workspace>
              <select aria-label="工作区"><option>工作区：默认</option></select>
              <Down s={4} />
            </Workspace>
            <QuickButton $narrow aria-label="自定义"><svg width="8" height="7" viewBox="0 0 8 7"><path d="M0 0h8v1H0zM0 2h8L4 7z" fill="#111" /></svg></QuickButton>
            <Title>{"Autodesk 3ds Max  2014 x64     场景1.max"}</Title>
            <QuickButton $narrow aria-label="展开"><svg width="4" height="8"><path d="M0 0l4 4-4 4z" fill="#111" /></svg></QuickButton>
            <Search placeholder="键入关键字或短语" aria-label="搜索" />
            <QuickButton aria-label="查找"><I s={20} b={20}><path d="M4 4h4v4h4V4h4l2 7v6h-6v-5H8v5H2v-6z" fill="#ddd" stroke="#222" /></I></QuickButton>
            <QuickButton aria-label="登录"><I s={20} b={20}><circle cx="6" cy="6" r="4" stroke="#eee" strokeWidth="2.500" /><path d="M9 9l8 8M13 13l-2 2" stroke="#eee" strokeWidth="2.500" /></I></QuickButton>
            <QuickButton aria-label="通信"><I s={20} b={20}><path d="M4 3q1 10 12 11L10 9l4-5M7 12l-3 6h7z" fill="#eee" stroke="#333" /></I></QuickButton>
            <QuickButton aria-label="收藏"><I s={20} b={20}><path d="M4 5v7" stroke="#222" strokeWidth="2" /></I></QuickButton>
            <QuickButton aria-label="帮助"><I s={20} b={20}><circle cx="10" cy="10" r="6" fill="#ddd" /></I></QuickButton>
            <WindowButtons>
              <button aria-label="最小化"><I s={12} b={12}><path d="M1 9h10" stroke="#222" strokeWidth="2" /></I></button>
              <button aria-label="还原"><I s={12} b={12}><path d="M4 4V1h7v6H8M1 4.500h7v6H1z" stroke="#222" strokeWidth="1.500" /></I></button>
              <button aria-label="关闭"><I s={12} b={12}><path d="M2 2l8 8M10 2l-8 8" stroke="#222" strokeWidth="2" /></I></button>
            </WindowButtons>
          </TitleRow>
          <MenuBar>
            {menus.map(([t, k]) => <button key={t + k}>{t}<kbd>{k}</kbd></button>)}
          </MenuBar>
        </HeaderRows>
      </Header>

      <Toolbar>
        <ToolbarInner>
          <Grip />
          {tools.map((t, i) =>
            t.k === "-" ? <Sep key={i} /> : t.select ? (
              <ToolSelect key={i} $w={t.select[1]}><Choice label={t.k} value={t.select[0]} dim={t.select[2]} /></ToolSelect>
            ) : (
              <Tool key={i} $on={t.on} aria-label={t.k}><I>{t.d}</I></Tool>
            )
          )}
        </ToolbarInner>
      </Toolbar>
      <RibbonTabs>
        <RibbonTab $w={92} $on>建模</RibbonTab>
        <RibbonTab $w={60}>自由形式</RibbonTab>
        <RibbonTab $w={91}>选择</RibbonTab>
        <RibbonTab $w={116}>对象绘制</RibbonTab>
        <RibbonTab $w={92}>填充</RibbonTab>
        <RibbonView>
          <QuickButton $narrow aria-label="最小化功能区"><svg width="13" height="7" viewBox="0 0 13 7"><rect width="13" height="7" rx="1" fill="#ddd" /><path d="M4 2h5L6.500 5z" fill="#222" /></svg></QuickButton>
          <QuickButton $narrow aria-label="更多"><Down s={4} c="#ccc" /></QuickButton>
        </RibbonView>
      </RibbonTabs>
      <RibbonPanels>{ribbonPanels.map((r) => <button key={r}>{r}</button>)}</RibbonPanels>

      <Body>
        <SideTools>
          <SideLine $top />
          {side.map((s, i) => (s === "-" ? <SideLine key={i} /> : <SideTool key={i} aria-label={`工具 ${i + 1}`}><I s={26}>{s}</I></SideTool>))}
        </SideTools>
        <LayoutStrip>
          <StripHead />
          <StripPlay aria-label="展开布局"><svg width="6" height="10"><path d="M0 0l6 5-6 5z" fill="#eee" /></svg></StripPlay>
          <LayoutThumb aria-label="布局"><span /></LayoutThumb>
        </LayoutStrip>
        <Centre>
          <Viewport>
            <ViewLabel>
              <b>[+][</b><span>正交</span><b>][</b><button>明暗处理 + 边面</button><b>]</b>
            </ViewLabel>
            <Canvas>
              <SceneDrawing />
              <Caddy onSubmit={(e) => e.preventDefault()}>
                <CaddyTitle>切角<br />-边切角量</CaddyTitle>
                <Pill $w={79} $focus>
                  <svg width="12" height="20" viewBox="0 0 12 20"><path d="M6 1L2 6h3v8H2l4 5 4-5H7V6h3z" fill="#111" /></svg>
                  <AmountInput aria-label="边切角量" defaultValue="0.451mm" />
                </Pill>
                <Pill $w={73}>
                  <svg width="14" height="16" viewBox="0 0 14 16"><path d="M2 4l3-3h7v11l-3 3H2zM2 8h7l3-3M2 11h7l3-3" fill="#b8cde8" stroke="#334" /></svg>
                  <input aria-label="连接边分段" defaultValue="3" />
                </Pill>
                <Pill $w={48}>
                  <svg width="14" height="14" viewBox="0 0 14 14"><path d="M.5.5h13v13H.5zM4.500 0v14M9.500 0v14M0 4.500h14M0 9.500h14" fill="#b8cde8" stroke="#334" /><path d="M4 4h6v6H4z" fill="#123060" /></svg>
                  <svg width="13" height="12" viewBox="0 0 13 12"><path d="M2 7l3 3 7-8" fill="none" stroke="#888" strokeWidth="2" /></svg>
                </Pill>
                <CaddyActions>
                  <button aria-label="确定"><I s={14} b={14}><path d="M2 7l4 4 7-8" stroke="#2c7a2c" strokeWidth="2" /></I></button>
                  <button aria-label="应用并继续"><I s={14} b={14}><path d="M7 1v12M1 7h12" stroke="#2c7a2c" strokeWidth="2" /></I></button>
                  <button aria-label="取消"><I s={14} b={14}><path d="M2 2l10 10M12 2L2 12" stroke="#b02c3c" strokeWidth="2" /></I></button>
                </CaddyActions>
              </Caddy>
            </Canvas>
          </Viewport>
          <TrackRow>
            <TrackButton $w={17}>&lt;</TrackButton>
            <TrackButton $w={124}>0 / 100</TrackButton>
            <TrackButton $w={16}>&gt;</TrackButton>
          </TrackRow>
          <TimeRow>
            <TimeIcon aria-label="迷你曲线编辑器"><I s={18} b={18}><path d="M1 1h16v5H1zM1 4q4-3 8 0t8 0M1 16.500h16v-3M1 13v4M5 13V8M3 10l2-2 2 2M13 8v5M11 11l2 2 2-2" stroke="#bbb" /></I></TimeIcon>
            <Ruler>
              <Ticks>{Array.from({ length: 101 }, (_, i) => <i key={i} />)}</Ticks>
              <TickLabels>{Array.from({ length: 21 }, (_, i) => <span key={i}>{i * 5}</span>)}</TickLabels>
            </Ruler>
          </TimeRow>
        </Centre>

        <Panel>
          <PanelTabs>{tabs.map((t, i) => <PanelTab key={i} $on={i === 1} aria-label={`面板 ${i + 1}`}><I s={19} b={20}>{t}</I></PanelTab>)}</PanelTabs>
          <NameRow>
            <NameInput aria-label="对象名称" defaultValue="Box001" />
            <Swatch aria-label="对象颜色" />
          </NameRow>
          <ModifierRow><Choice label="修改器列表" value="修改器列表" w={163} h={22} /></ModifierRow>
          <Stack>
            <StackItem>
              <svg width="10" height="10"><path d="M0 0h10v10H0z" fill="#000" /><path d="M2 5h6M5 2v6" stroke="#fff" /></svg>
              <span>可编辑多边形</span><EdgeTri />
            </StackItem>
          </Stack>
          <StackTools>
            <button aria-label="锁定堆栈"><I s={16} b={16}><path d="M0 8h6" stroke="#ddd" /><path d="M6.500 3v10M14.500 3v10" stroke="#ddd" strokeWidth="2" /><path d="M7 6h7v4H7z" fill="#111" stroke="#ddd" /></I></button>
            <Sep />
            <button aria-label="显示最终结果"><I s={16} b={16}><path d="M4 1h8l-2 4v10H6V5z" fill="#ddd" /></I></button>
            <Sep />
            <button aria-label="使唯一"><I s={16} b={16}><path d="M1 2l5 7M15 2l-5 7M4 9l4 5 4-5zM7 6h2" stroke="#ddd" /></I></button>
            <button aria-label="移除修改器"><I s={16} b={16}><path d="M4 8l1 6h6l1-6q-4-5-8 0zM5 5l2-3 5-1M6 10h4" stroke="#ddd" /></I></button>
            <Sep />
            <button aria-label="配置修改器集"><I s={18} b={18}><path d="M1 1h13v13H1z" fill="#eee" /><path d="M1 1h13v3H1z" fill="#1830a0" /><path d="M7 8h9v8H7z" fill="#ddd" stroke="#333" strokeDasharray="2 1" /></I></button>
          </StackTools>
          <Rule />
          <RollArea>
            <Rolls>
              <Rollout $h={226} $top={11}>
                <RollHead><span>-</span><span>选择</span></RollHead>
                <SubObjects>
                  <button aria-label="顶点"><I s={16} b={16}><path d="M2 4h1M5 9h2v2H5zM13 2h2M10 12h1M7 7l2-1" stroke="#b01818" strokeWidth="1.500" /></I></button>
                  <EdgeMode aria-label="边"><EdgeTri c="#a03010" /></EdgeMode>
                  <button aria-label="边界"><I s={16} b={16}><path d="M5 2l4-1 3 4-1 7-5 3-2-5 3-3z" stroke="#b01818" strokeWidth="1.500" /></I></button>
                  <button aria-label="多边形"><I s={14} b={14}><path d="M1.500 1.500h11v11h-11z" fill="#f00" stroke="#111" /></I></button>
                  <button aria-label="元素"><I s={14} b={14}><path d="M1 5l4-4h8v7l-4 5H1z" fill="#f00" stroke="#111" /><path d="M9 5l4-4v7l-4 5z" fill="#50108c" /><path d="M1 5h8" stroke="#111" /></I></button>
                </SubObjects>
                <CheckRow><Check><input type="checkbox" />按顶点</Check></CheckRow>
                <CheckRow><Check><input type="checkbox" />忽略背面</Check></CheckRow>
                <CheckRow><Check $dim><input type="checkbox" />按角度:</Check><AngleInput aria-label="角度" defaultValue="45.0" /><Spin /></CheckRow>
                <ButtonGrid $gap={4} $pad="3px 4px 0 6px">
                  <FlatButton>收缩</FlatButton><FlatButton>扩大</FlatButton>
                  <Pair><FlatButton>环形</FlatButton><Spin /></Pair>
                  <Pair><FlatButton>循环</FlatButton><Spin /></Pair>
                </ButtonGrid>
                <Group>
                  <legend>预览选择</legend>
                  <Radio><input type="radio" name="preview" defaultChecked />禁用</Radio>
                  <Radio><input type="radio" name="preview" />子对象</Radio>
                  <Radio><input type="radio" name="preview" />多个</Radio>
                </Group>
                <Count>选择了 226 个边</Count>
              </Rollout>
              <Rollout $h={11} $top={8}><RollHead><span>+</span><span>软选择</span></RollHead></Rollout>
              <Rollout>
                <RollHead><span>-</span><span>编辑边</span></RollHead>
                <ButtonGrid $gap={5} $pad="7px 5px 0 6px">
                  <Pair $wide><FlatButton>插入顶点</FlatButton></Pair>
                  <FlatButton>移除</FlatButton><FlatButton>分割</FlatButton>
                  <Pair><FlatButton>挤出</FlatButton><Settings /></Pair><Pair><FlatButton>焊接</FlatButton><Settings /></Pair>
                  <Pair><FlatButton>切角</FlatButton><Settings /></Pair><FlatButton>目标焊接</FlatButton>
                  <Pair><FlatButton>桥</FlatButton><Settings /></Pair><Pair><FlatButton>连接</FlatButton><Settings /></Pair>
                  <Pair $wide><FlatButton>利用所选内容创建图形</FlatButton></Pair>
                </ButtonGrid>
              </Rollout>
            </Rolls>
            <Scroll />
            <Flyout aria-label="展开"><svg width="6" height="12" fill="none"><path d="M5 1L1 6l4 5" stroke="#999" /></svg></Flyout>
          </RollArea>
        </Panel>
      </Body>

      <Status>
        <Listener>
          <ListenerLine $pink aria-label="宏录制器" />
          <ListenerLine aria-label="侦听器" defaultValue="-- 运行时错误:" />
        </Listener>
        <StatusColumn>
          <StatusLine>
            <Prompt>选择了 1 个 对象</Prompt>
            <SmallTool $on $w={21} aria-label="孤立当前选择"><I s={16} b={16}><circle cx="8" cy="5" r="4" fill="#f08080" stroke="#fff" /><path d="M8 9v6" stroke="#fff" strokeWidth="3" /></I></SmallTool>
            <SmallTool $w={30} aria-label="选择锁定"><I s={14} b={14}><path d="M4 6V3q3-3 6 0v3" stroke="#ccc" strokeWidth="1.500" /><path d="M2 6h10v7H2z" fill="#e6d8a4" /><path d="M7 8v3" stroke="#222" /></I></SmallTool>
            <SmallTool aria-label="绝对模式"><I s={14} b={14}><path d="M0 0h5v5H0zM9 0h5v5H9zM0 9h5v5H0zM9 9h5v5H9z" fill="#eee" /><circle cx="7" cy="7" r="3.500" fill="#444" stroke="#eee" strokeWidth="1.500" /></I></SmallTool>
            <Coord>X:<input aria-label="X" /></Coord>
            <Coord>Y:<input aria-label="Y" /></Coord>
            <Coord>Z:<input aria-label="Z" /></Coord>
          </StatusLine>
          <StatusLine>
            <Prompt>单击或单击并拖动以选择对象</Prompt>
            <SmallTool $on $w={22} aria-label="自适应降级"><I s={16} b={16}><path d="M3 6l3-3h8v7l-3 4H3z" fill="#fff" stroke="#234" /><path d="M3 6h8v8M11 6l3-3" stroke="#234" /></I></SmallTool>
          </StatusLine>
        </StatusColumn>
        <StatusColumn $w={102}>
          <StatusLine>栅格 = 10.0mm</StatusLine>
          <StatusLine>添加时间标记</StatusLine>
        </StatusColumn>
        <FlatButton $w={42} $h={45} aria-label="设置关键点"><svg width="24" height="12" viewBox="0 0 24 12" fill="none"><circle cx="5" cy="6" r="4" stroke="#111" strokeWidth="2" /><path d="M9 6h14v4M18 6v4" stroke="#111" strokeWidth="2" /></svg></FlatButton>
        <StatusColumn $w={76} $pad={5}>
          <Pair><FlatButton $h={22}>自动关键点</FlatButton></Pair>
          <Pair><FlatButton $h={20}>设置关键点</FlatButton></Pair>
        </StatusColumn>
        <StatusColumn $w={112} $gap={4}>
          <Choice label="关键点集" value="选定对象" h={21} />
          <Pair>
            <SmallTool $w={21} aria-label="切线"><I s={18} b={18}><path d="M1 10q3 8 5 2t5-8 5 8" stroke="#c04850" strokeWidth="1.500" /><path d="M18 14v4h-4z" fill="#fff" /></I></SmallTool>
            <FlatButton $h={20}>关键点过滤器...</FlatButton>
          </Pair>
        </StatusColumn>
        <PlayGrid>
          {play.map((p, i) => <button key={i} aria-label={`播放 ${i + 1}`}><svg width="18" height="18" fill="none" stroke="#ddd" strokeWidth="1.500">{p}</svg></button>)}
          <button aria-label="关键点模式"><svg width="18" height="18" fill="none" stroke="#ddd" strokeWidth="1.500"><path d="M2 5v8M16 5v8M8 6L4 9l4 3zM10 6l4 3-4 3z" /></svg></button>
          <FrameField><input aria-label="当前帧" defaultValue="0" /><Spin /></FrameField>
          <TimeConfig><button aria-label="时间配置"><I s={18} b={18}><path d="M1 2h10v13H1z" fill="#dfe6f0" /><path d="M3 4h3v3H3zM7 5h3M3 10h6" stroke="#2a5088" /><circle cx="13" cy="12" r="4.500" fill="#eee" stroke="#246" /><path d="M13 9v3h2" stroke="#111" /></I></button></TimeConfig>
        </PlayGrid>
        <NavGrid>{nav.map((n, i) => <button key={i} aria-label={`导航 ${i + 1}`}><I s={18} b={18}>{n}</I></button>)}</NavGrid>
      </Status>

      {marks.map(([x, y]) => (
        <Watermark key={`${x}-${y}`} $x={x} $y={y}>零度网官方网址<span>WWW.ZEROCGN.COM</span></Watermark>
      ))}
      <Logo>
        <LogoName><span>Z</span>ero<b>零度网</b></LogoName>
        <LogoSlogan>一个祝您实现梦想的网站</LogoSlogan>
        <LogoUrl>WWW.ZEROCGN.COM</LogoUrl>
      </Logo>
      <Corner>
        <svg width="160" height="166" viewBox="1280 14 160 166">
          <path d="M1294 14h80l66 66v82z" fill="#ff4e08" />
          <g fill="#fff" textAnchor="middle">
            <text transform="translate(1385 69) rotate(46)" y="11" fontSize="29" fontWeight="900" fontFamily="Noto Sans CJK SC">零度原创</text>
            <text transform="translate(1360 98) rotate(44)" y="7" fontSize="19" fontFamily="Liberation Sans">WWW.ZEROCGN.COM</text>
          </g>
        </svg>
      </Corner>
      <Subtitle>注意中间的缝隙不要太宽，尤其是十字交叉的地方。</Subtitle>
      <Captions>
        <p>零度网官方网址:<span>WWW.ZEROCGN.COM</span></p>
        <p>作为原创 只为您能学的更好 超简单的方法让您事半功倍 操作软件游刃有余</p>
      </Captions>
      <Badge>
        <svg width="132" height="126" viewBox="1287 745 132 126">
          <g fill="#b0b0b0" stroke="#555" strokeWidth=".5">
            {[-1, 1].map((dir) =>
              leaves.map((i) => {
                const a = ((-62 + i * 12.400) * Math.PI) / 180;
                const x = 1353 + dir * Math.cos(a) * 58;
                const y = 808 + Math.sin(a) * 56;
                const turn = ((a * 180) / Math.PI + 90) * dir;
                return (
                  <g key={`${dir}${i}`} transform={`translate(${x} ${y})`}>
                    <ellipse cx={dir * 3} rx="7" ry="2.500" transform={`rotate(${turn + dir * 22})`} />
                    <ellipse cx={-dir * 3} rx="7" ry="2.500" transform={`rotate(${turn - dir * 24})`} />
                  </g>
                );
              })
            )}
          </g>
          <g fill="#f4f4f4" textAnchor="middle">
            <text x="1353" y="800" fontSize="22" fontWeight="900" fontFamily="Noto Sans CJK SC">零度教育</text>
            <text x="1352" y="815" fontSize="9" fontFamily="Liberation Sans">ZERO TOP EDUCATION</text>
            <path d="M1305 820h94v1h-94z" />
            <text x="1360" y="838" fontSize="8" fontWeight="bold" fontFamily="Liberation Sans">ART•WORLD</text>
            <text x="1360" y="844" fontSize="4" fontWeight="bold" fontFamily="Liberation Sans">WWW.ZEROCGN.COM</text>
          </g>
          <path d="M1325 832h11v11h-11zM1327 835h3v3h-3zM1332 834v8M1326 840h9" fill="none" stroke="#ddd" strokeWidth="1.500" strokeDasharray="2 1" />
        </svg>
      </Badge>
    </Page>
  );
}
